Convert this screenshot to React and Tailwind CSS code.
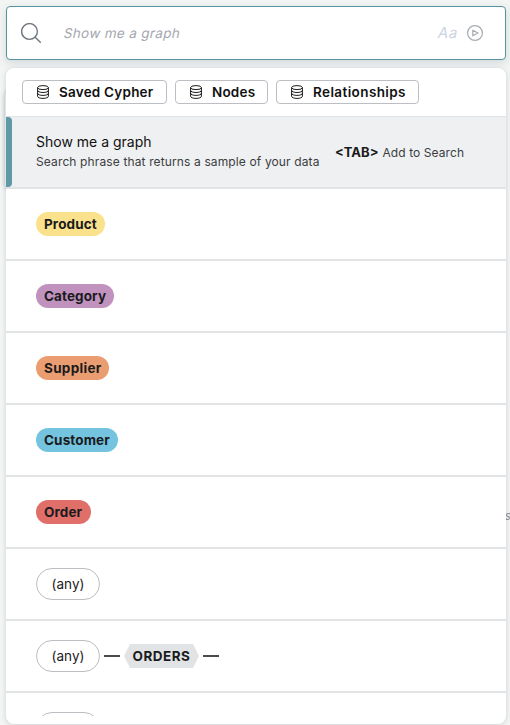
import React from 'react';

function DatabaseIcon() {
  return (
    <svg className="h-[14px] w-3 shrink-0" viewBox="0 0 12 14" fill="none" stroke="#111" strokeWidth="0.95">
      <ellipse cx="6" cy="2.6" rx="5.4" ry="2" />
      <path d="M.6 2.6v8.7c0 1.2 2.4 2.1 5.4 2.1s5.4-.9 5.4-2.1V2.6" />
      <path d="M.6 5.4c0 1.2 2.4 2.1 5.4 2.1s5.4-.9 5.4-2.1M.6 8.3c0 1.2 2.4 2.1 5.4 2.1s5.4-.9 5.4-2.1" />
    </svg>
  );
}

const filters = [
  { label: 'Saved Cypher', box: 'w-[145px]', text: 'tracking-[0.22px]' },
  { label: 'Nodes', box: 'w-[93px]', text: 'tracking-[0.2px]' },
  { label: 'Relationships', box: 'w-[143px]', text: 'tracking-[0.4px]' },
];

const labels = [
  { label: 'Product', style: 'w-[69px] bg-[#fae18c] tracking-[0.12px]' },
  { label: 'Category', style: 'w-[78px] bg-[#c092bd] tracking-[0.1px]' },
  { label: 'Supplier', style: 'w-[73px] bg-[#ea9d70] tracking-[0.3px]' },
  { label: 'Customer', style: 'w-[82px] bg-[#74c4e0] tracking-[0.12px]' },
  { label: 'Order', style: 'w-[55px] bg-[#e06e69] tracking-[0.12px]' },
];

function Row({ children }) {
  return (
    <div className="flex h-[72px] shrink-0 items-center border-b-2 border-[#e2e3e5] pl-[30px]">{children}</div>
  );
}

function AnyNode() {
  return (
    <span className="flex h-8 w-16 shrink-0 items-center justify-center rounded-full border border-[#bbbec3] text-[13.5px] text-[#1a1b1d]">
      (any)
    </span>
  );
}

export default function App() {
  return (
    <div className="relative h-[725px] w-[510px] overflow-hidden bg-[#f3f5f5] px-1.5 pr-1 pt-1.5 font-['Inter','Liberation_Sans',sans-serif] whitespace-nowrap">
      <div className="absolute top-[508px] left-[505px] text-[11px] text-[#888] italic">s</div>
      <div className="absolute top-[90px] left-[5px] h-[100px] w-3 rounded-lg shadow-[0_0_5px_rgba(60,70,80,0.3)]" />
      <div className="relative flex h-[54px] w-[500px] items-center rounded-[4px] border border-[#5595a0] bg-white pl-[14px] shadow-[0_3px_8px_rgba(50,60,65,0.16)]">
        <svg className="h-5 w-5 shrink-0" viewBox="0 0 20 20" fill="none" stroke="#70757d" strokeWidth="1.4" strokeLinecap="round">
          <circle cx="8.5" cy="8.5" r="7.9" />
          <path d="m14.2 14.2 5.1 5.1" />
        </svg>
        <span className="ml-[23px] inline-block -skew-x-12 text-[13.5px] tracking-[0.33px] text-[#a3a7ae]">Show me a graph</span>
        <span className="ml-auto inline-block -skew-x-12 text-[15px] tracking-[0.6px] text-[#cbd4e2]">Aa</span>
        <svg className="mr-[22px] ml-[9px] h-4 w-4 shrink-0" viewBox="0 0 16 16" fill="none" stroke="#a6aab0" strokeWidth="1.2" strokeLinejoin="round">
          <circle cx="8" cy="8" r="7.4" />
          <path d="M5.8 5.2v5.6L11 8z" />
        </svg>
      </div>
      <div className="relative mt-2 flex h-[656px] w-[500px] flex-col overflow-hidden rounded-lg bg-white pb-2 shadow-[0_1px_5px_rgba(50,60,65,0.2)]">
        <div className="flex h-[49px] shrink-0 gap-2 border-b border-[#e2e3e5] pt-3 pl-4">
          {filters.map((f) => (
            <button key={f.label} className={`flex h-6 items-center gap-[10px] rounded-[4px] border border-[#bbbec3] pl-[14px] text-[13.5px] font-semibold text-[#111] ${f.box}`}>
              <DatabaseIcon />
              <span className={`pb-px leading-5 ${f.text}`}>{f.label}</span>
            </button>
          ))}
        </div>
        <div className="flex min-h-0 flex-col overflow-hidden">
          <div className="flex h-[72px] shrink-0 items-center border-b-2 border-[#e2e3e5] bg-[#eff0f2]">
            <div className="h-[70px] w-1.5 rounded-r-[4px] bg-[#5f99a3]" />
            <div className="ml-6 w-[299px]">
              <div className="text-[14px] leading-5 text-[#111]">Show me a graph</div>
              <div className="text-[12px] leading-5 tracking-[0.13px] text-[#3b3d41]">Search phrase that returns a sample of your data</div>
            </div>
            <div className="flex items-baseline gap-1 pt-0.5 text-[12px] text-[#3b3d41]">
              <b className="text-[13px] text-[#1a1b1d]">&lt;TAB&gt;</b>
              <span className="tracking-[0.08px]">Add to Search</span>
            </div>
          </div>
          {labels.map((l) => (
            <Row key={l.label}>
              <span className={`flex h-6 items-center rounded-full pl-2 text-[13.5px] font-bold text-[#1a1b1d] ${l.style}`}>{l.label}</span>
            </Row>
          ))}
          <Row><AnyNode /></Row>
          <Row>
            <AnyNode />
            <span className="ml-1 h-0.5 w-4 bg-[#4a4c50]" />
            <span className="ml-1 flex h-6 w-[75px] items-center justify-center bg-[#e2e3e5] text-[13.5px] font-bold tracking-[0.5px] text-[#1a1b1d] [clip-path:polygon(6px_0,69px_0,100%_50%,69px_100%,6px_100%,0_50%)]">ORDERS</span>
            <span className="ml-1 h-0.5 w-4 bg-[#4a4c50]" />
          </Row>
          <Row><AnyNode /></Row>
        </div>
      </div>
    </div>
  );
}
